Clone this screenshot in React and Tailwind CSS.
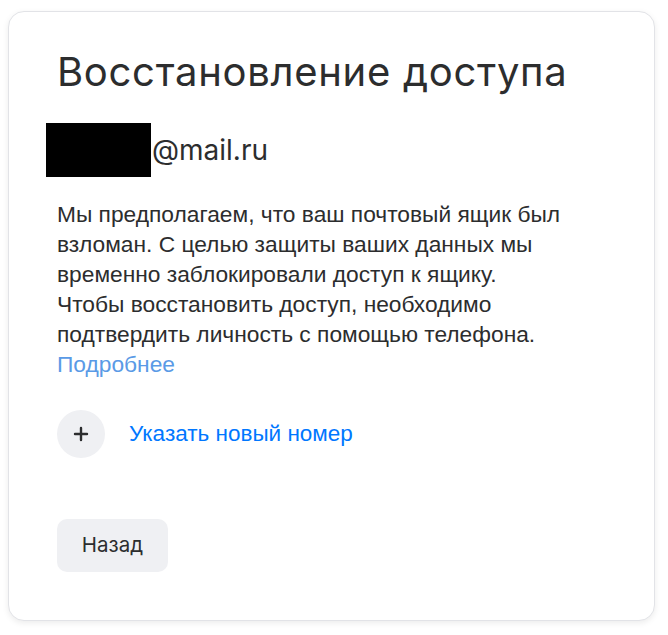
import React from 'react';

export default function App() {
    return (
        <div className="w-[668px] h-[635px] bg-white pt-[11px] pl-[8px]">
            <div className="w-[647px] h-[610px] bg-white rounded-[16px] border border-[#e2e3e7] shadow-[0_2px_6px_rgba(0,0,0,0.08)] pl-[48px] pr-[30px] pt-[38px]">
                {/* Header */}
                <h1 className="text-[40px] leading-[44px] text-[#2c2d2e] font-['Inter',sans-serif] tracking-[0.7px]">
                    Восстановление доступа
                </h1>

                <div className="mt-[29px] flex items-center h-[54px] -ml-[11px]">
                    <div className="w-[105px] h-[54px] bg-black" />
                    <span className="text-[28px] text-[#2c2d2e] font-['Inter',sans-serif] ml-[1px]">@mail.ru</span>
                </div>

                <p className="mt-[22px] text-[22.75px] leading-[30px] text-[#2c2d2e] font-['Liberation_Sans',Arial,sans-serif] max-w-[505px]">
                    Мы предполагаем, что ваш почтовый ящик был взломан. С целью защиты ваших данных мы временно
                    заблокировали доступ к ящику.
                    <br />
                    Чтобы восстановить доступ, необходимо подтвердить личность с помощью телефона.
                    <br />
                    <a href="#" className="text-[#5a9ae6]">Подробнее</a>
                </p>

                <button className="mt-[31px] flex items-center gap-[24px]">
                    <span className="w-[48px] h-[48px] rounded-full bg-[#eff0f3] flex items-center justify-center">
                        <svg width="18" height="18" viewBox="0 0 18 18">
                            <path d="M9 3v12M3 9h12" stroke="#2c2d2e" strokeWidth="2.4" strokeLinecap="round" />
                        </svg>
                    </span>
                    <span className="text-[22.5px] text-[#0077ff] font-['Liberation_Sans',Arial,sans-serif]">
                        Указать новый номер
                    </span>
                </button>

                <button className="mt-[61px] w-[111px] h-[53px] rounded-[10px] bg-[#eff0f3] text-[20.5px] text-[#2c2d2e] font-['Inter',sans-serif]">
                    Назад
                </button>
            </div>
        </div>
    );
}
